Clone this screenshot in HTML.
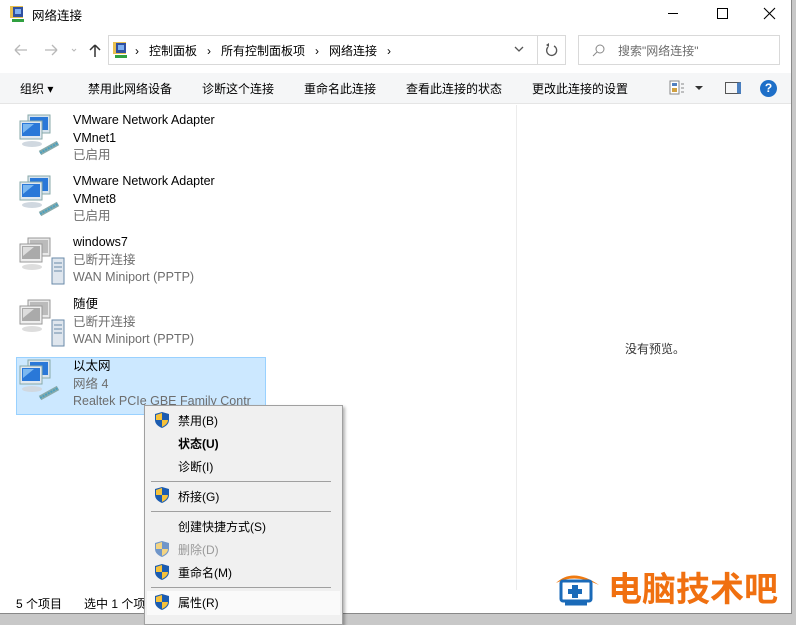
<!DOCTYPE html>
<html><head><meta charset="utf-8"><style>
*{margin:0;padding:0;box-sizing:border-box}
body{width:796px;height:619px;overflow:hidden;background:#c8c8c8;font-family:"Liberation Sans","Noto Sans CJK SC",sans-serif;font-size:12px;color:#000;position:relative}
.win{position:absolute;left:0;top:0;width:792px;height:614px;background:#fff;border-right:1px solid #888;border-bottom:1px solid #888}
.abs{position:absolute;white-space:nowrap}
.gray{color:#6d6d6d}
.tb span{position:absolute;top:80px;font-size:12px}
.item{position:absolute;left:73px;line-height:17.5px;font-size:12.5px}
.menu{position:absolute;left:144px;top:405px;width:199px;height:220px;background:#f0f0f0;border:1px solid #a0a0a0;box-shadow:2px 2px 3px rgba(0,0,0,.3)}
.mi{position:absolute;left:33px;font-size:12px}
.sep{position:absolute;left:6px;width:180px;height:1px;background:#a0a0a0}
.sh{position:absolute;left:10px;width:14px;height:16px}
</style></head><body>
<div class="win">
<svg class="abs" style="left:9px;top:5px" width="18" height="18"><rect x="1" y="1" width="13" height="12" fill="#e8c050"/><rect x="4" y="2" width="10" height="10" fill="#3050a0"/><rect x="6" y="4" width="6" height="5" fill="#80b0f0"/><rect x="3" y="14" width="12" height="3" fill="#30a040"/></svg>
<div class="abs" style="left:32px;top:5px;font-size:12.5px">网络连接</div>
<div class="abs" style="left:668px;top:13px;width:10px;height:1px;background:#000"></div>
<div class="abs" style="left:717px;top:8px;width:11px;height:11px;border:1px solid #000"></div>
<svg class="abs" style="left:763px;top:7px" width="13" height="13"><path d="M1 1L12 12M12 1L1 12" stroke="#000" stroke-width="1.1"/></svg>
<svg class="abs" style="left:12px;top:42px" width="100" height="16"><path d="M3 8H15M3 8L8 3M3 8L8 13" stroke="#b8b8b8" fill="none" stroke-width="1.3"/><path d="M33 8H45M45 8L40 3M45 8L40 13" stroke="#b8b8b8" fill="none" stroke-width="1.3"/><path d="M60 7L62 9L64 7" stroke="#b8b8b8" fill="none"/><path d="M83 15V3M83 3L78 8M83 3L88 8" stroke="#333" fill="none" stroke-width="1.5"/></svg>
<div class="abs" style="left:108px;top:35px;width:458px;height:30px;border:1px solid #d9d9d9"></div>
<div class="abs" style="left:537px;top:36px;width:1px;height:28px;background:#d9d9d9"></div>
<svg class="abs" style="left:112px;top:41px" width="18" height="18"><rect x="1" y="1" width="13" height="12" fill="#e8c050"/><rect x="4" y="2" width="10" height="10" fill="#3050a0"/><rect x="6" y="4" width="6" height="5" fill="#80b0f0"/><rect x="3" y="14" width="12" height="3" fill="#30a040"/></svg>
<div class="abs" style="left:135px;top:42px;font-size:12px">›&nbsp;&nbsp;&nbsp;控制面板&nbsp;&nbsp;&nbsp;›&nbsp;&nbsp;&nbsp;所有控制面板项&nbsp;&nbsp;&nbsp;›&nbsp;&nbsp;&nbsp;网络连接&nbsp;&nbsp;&nbsp;›</div>
<svg class="abs" style="left:514px;top:45px" width="10" height="8"><path d="M1 2L5 6L9 2" stroke="#555" fill="none" stroke-width="1.3"/></svg>
<svg class="abs" style="left:544px;top:42px" width="14" height="16"><path d="M10 4A5 5 0 1 1 4 5" stroke="#555" fill="none" stroke-width="1.3"/><path d="M2 3L5 5L5 1" fill="#555"/></svg>
<div class="abs" style="left:578px;top:35px;width:202px;height:30px;border:1px solid #d9d9d9"></div>
<svg class="abs" style="left:592px;top:43px" width="14" height="14"><circle cx="8" cy="6" r="4" stroke="#888" fill="none"/><path d="M5 9L1 13" stroke="#888"/></svg>
<div class="abs gray" style="left:618px;top:42px">搜索"网络连接"</div>
<div class="abs" style="left:0;top:73px;width:791px;height:31px;background:#f5f6f7;border-bottom:1px solid #e5e5e5"></div>
<div class="tb">
<span style="left:20px">组织 ▾</span><span style="left:88px">禁用此网络设备</span><span style="left:202px">诊断这个连接</span><span style="left:304px">重命名此连接</span><span style="left:406px">查看此连接的状态</span><span style="left:532px">更改此连接的设置</span>
</div>
<svg class="abs" style="left:668px;top:80px" width="40" height="16"><rect x="2" y="1" width="9" height="13" fill="#fff" stroke="#888"/><rect x="4" y="3" width="5" height="3" fill="#5080c0"/><rect x="4" y="8" width="5" height="4" fill="#d0a040"/><path d="M13 4H16M13 8H16M13 12H16" stroke="#888"/><path d="M27 6L31 10L35 6Z" fill="#333"/></svg>
<div class="abs" style="left:725px;top:82px;width:16px;height:12px;border:1px solid #555;border-right:4px solid #4a7fc0"></div>
<div class="abs" style="left:760px;top:80px;width:17px;height:17px;border-radius:50%;background:#1e6fc8;color:#fff;font-weight:bold;font-size:12px;text-align:center;line-height:17px">?</div>
<div class="abs" style="left:516px;top:105px;width:1px;height:485px;background:#ececec"></div>
<div class="abs" style="left:625px;top:340px;color:#333">没有预览。</div>
<div class="abs" style="left:16px;top:357px;width:250px;height:58px;background:#cce8ff;border:1px solid #99d1ff"></div>
<svg width="0" height="0" style="position:absolute"><defs>
<g id="pc"><rect x="10" y="2" width="22" height="18" fill="#d8e4ee" stroke="#8aa"/><rect x="12" y="4" width="18" height="13" fill="#2a78d8"/><rect x="2" y="8" width="22" height="18" fill="#e0e8f0" stroke="#8aa"/><rect x="4" y="10" width="18" height="13" fill="#2a78d8"/><path d="M5 11L16 11L5 20Z" fill="#7cb8f0"/><ellipse cx="14" cy="31" rx="10" ry="3" fill="#d0d8e0"/></g>
<g id="pcg"><rect x="10" y="2" width="22" height="18" fill="#e8e8e8" stroke="#999"/><rect x="12" y="4" width="18" height="13" fill="#bbb"/><rect x="2" y="8" width="22" height="18" fill="#eee" stroke="#999"/><rect x="4" y="10" width="18" height="13" fill="#aaa"/><path d="M5 11L16 11L5 20Z" fill="#ddd"/><ellipse cx="14" cy="31" rx="10" ry="3" fill="#ddd"/></g>
</defs></svg>
<svg class="abs" style="left:18px;top:113px" width="48" height="48"><use href="#pc"/><path d="M22 40L40 30" stroke="#8aa" stroke-width="5"/><path d="M22 40L40 30" stroke="#4aa0c0" stroke-width="2" stroke-dasharray="2 1"/></svg>
<svg class="abs" style="left:18px;top:174px" width="48" height="48"><use href="#pc"/><path d="M22 40L40 30" stroke="#8aa" stroke-width="5"/><path d="M22 40L40 30" stroke="#4aa0c0" stroke-width="2" stroke-dasharray="2 1"/></svg>
<svg class="abs" style="left:18px;top:236px" width="48" height="52"><use href="#pcg"/><rect x="34" y="22" width="12" height="26" fill="#dfe6ee" stroke="#6a8aa8"/><path d="M36 27H44M36 31H44M36 35H44" stroke="#6a8aa8"/></svg>
<svg class="abs" style="left:18px;top:298px" width="48" height="52"><use href="#pcg"/><rect x="34" y="22" width="12" height="26" fill="#dfe6ee" stroke="#6a8aa8"/><path d="M36 27H44M36 31H44M36 35H44" stroke="#6a8aa8"/></svg>
<svg class="abs" style="left:18px;top:358px" width="48" height="48"><use href="#pc"/><path d="M22 40L40 30" stroke="#8aa" stroke-width="5"/><path d="M22 40L40 30" stroke="#4aa0c0" stroke-width="2" stroke-dasharray="2 1"/></svg>
<div class="item" style="top:112px">VMware Network Adapter<br>VMnet1<br><span class="gray">已启用</span></div>
<div class="item" style="top:173px">VMware Network Adapter<br>VMnet8<br><span class="gray">已启用</span></div>
<div class="item" style="top:234px">windows7<br><span class="gray">已断开连接<br>WAN Miniport (PPTP)</span></div>
<div class="item" style="top:296px">随便<br><span class="gray">已断开连接<br>WAN Miniport (PPTP)</span></div>
<div class="item" style="top:358px">以太网<br><span class="gray">网络 4<br>Realtek PCIe GBE Family Contr</span></div>
<div class="abs" style="left:16px;top:595px">5 个项目</div>
<div class="abs" style="left:84px;top:595px">选中 1 个项</div>
<svg class="abs" style="left:553px;top:571px" width="50" height="36"><path d="M3 12Q20 -4 46 14Q22 2 3 12Z" fill="#f07a10"/><rect x="8" y="10" width="30" height="20" rx="2" fill="#fff" stroke="#1a6ab8" stroke-width="3"/><path d="M19 14H25V18H29V23H25V27H19V23H15V18H19Z" fill="#1a6ab8"/><path d="M12 33H34" stroke="#1a6ab8" stroke-width="3"/></svg>
<div class="abs" style="left:608px;top:565px;font-size:34px;font-weight:bold;color:#f07010;font-family:'Noto Sans CJK SC',sans-serif;line-height:44px">电脑技术吧</div>
</div>
<div class="menu">
<svg width="0" height="0" style="position:absolute"><defs><g id="sh"><path d="M7 0L14 2V8Q14 13 7 16Q0 13 0 8V2Z" fill="#1c5cb0"/><path d="M7 1V8H1V3ZM7 8H13Q13 12 7 15Z" fill="#f6c23a"/></g></defs></svg>
<svg class="sh" style="top:6px"><use href="#sh"/></svg><div class="mi" style="top:6px">禁用(B)</div>
<div class="mi" style="top:29px;font-weight:bold">状态(U)</div>
<div class="mi" style="top:52px">诊断(I)</div>
<div class="sep" style="top:75px"></div>
<svg class="sh" style="top:81px"><use href="#sh"/></svg><div class="mi" style="top:82px">桥接(G)</div>
<div class="sep" style="top:105px"></div>
<div class="mi" style="top:112px">创建快捷方式(S)</div>
<svg class="sh" style="top:135px;opacity:.6"><use href="#sh"/></svg><div class="mi" style="top:135px;color:#999">删除(D)</div>
<svg class="sh" style="top:158px"><use href="#sh"/></svg><div class="mi" style="top:158px">重命名(M)</div>
<div class="sep" style="top:181px"></div>
<div class="abs" style="left:2px;top:185px;width:193px;height:24px;background:#fafafa"></div>
<svg class="sh" style="top:188px"><use href="#sh"/></svg><div class="mi" style="top:188px">属性(R)</div>
</div>
</body></html>
